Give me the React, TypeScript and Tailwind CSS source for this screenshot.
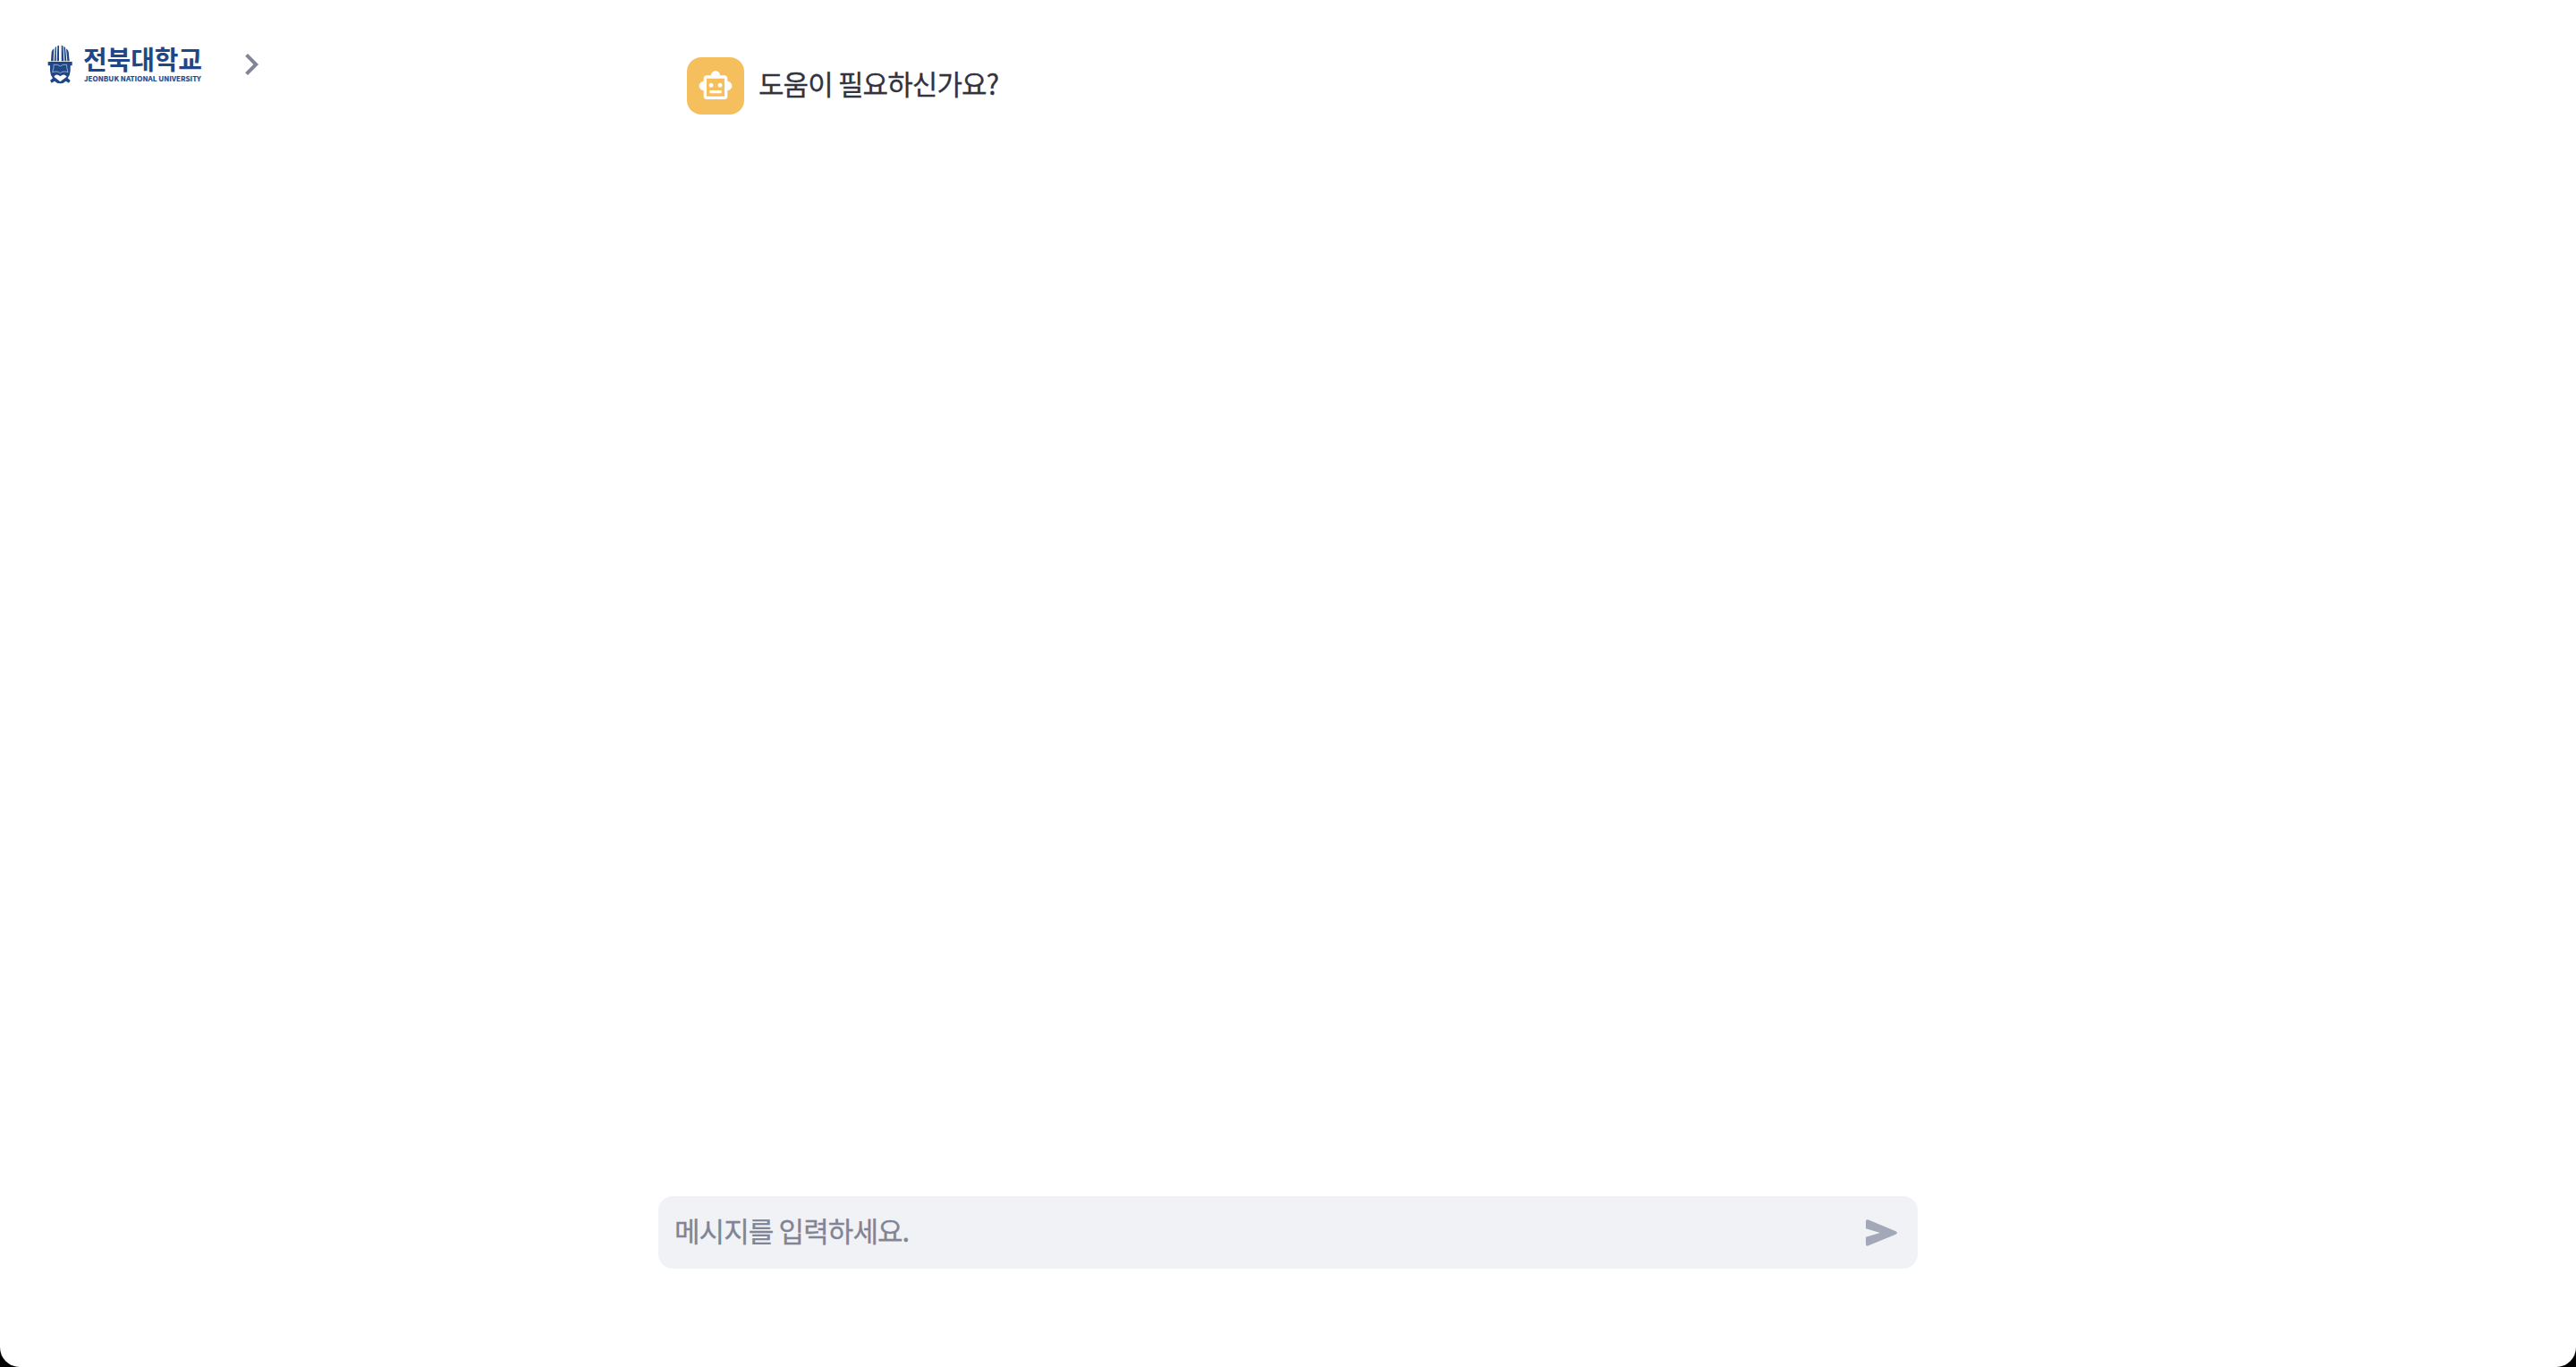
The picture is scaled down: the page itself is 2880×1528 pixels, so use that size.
function Crest() {
  return (
    <svg viewBox="36 30 84 132" className="h-11 w-7 shrink-0" fill="#1f4788" aria-hidden="true">
      <path d="M48 85 L50 54 Q52 47 58 43 L56 85Z" />
      <path d="M59 85 L62 39 L66 36 L65 85Z" />
      <path d="M68 85 L70 34 L75 32 L75 85Z" />
      <path d="M83 85 L83 32 L88 34 L91 85Z" />
      <path d="M94 85 L91 36 L96 39 L100 85Z" />
      <path d="M103 85 L99 43 Q106 48 107 54 L110 85Z" />
      <path d="M38 87 H119 V100 H113 V118 Q112 133 104 142 L113 150 L108 158 L98 152 Q90 160 79 160 Q68 160 60 152 L50 158 L45 150 L54 142 Q46 133 45 118 V100 H38Z" />
      <path d="M57 97 Q72 95 79 102 Q86 95 101 97 V106 L105 122 Q88 117 79 125 Q70 117 53 122 L57 106Z" fill="none" stroke="#a9bcd8" strokeWidth="2.5" />
      <path d="M58 137 Q64 128 73 132 L79 136 L85 132 Q94 128 101 137 L79 154Z" fill="#fff" />
    </svg>
  );
}

export default function App() {
  return (
    <div className="h-[1528px] w-full bg-black">
      <div className="flex h-full flex-col overflow-hidden rounded-b-[22px] bg-white font-['Noto_Sans_CJK_KR',sans-serif]">
        <div className="grid flex-1 grid-cols-[736px_1408px_1fr] items-start">
          <header className="flex pl-[53px] pt-[50px]">
            <Crest />
            <div className="ml-3 w-[136px] whitespace-nowrap text-[#1f4788]">
              <div className="-mt-0.5 h-9 text-[29px] font-bold leading-[34px] tracking-[-0.1px]">전북대학교</div>
              <div className="ml-px h-2 text-[8px] font-bold leading-[8px] tracking-[0.06px] [-webkit-text-stroke:0.2px]">
                JEONBUK NATIONAL UNIVERSITY
              </div>
            </div>
            <button aria-label="Open sidebar" className="-mt-0.5 ml-7 size-12">
              <svg viewBox="0 0 24 24" className="size-12" fill="#808495">
                <path d="M10 6L8.59 7.41 13.17 12l-4.58 4.59L10 18l6-6z" />
              </svg>
            </button>
          </header>
          <main className="flex items-center gap-4 pl-8 pt-16">
            <div className="flex size-16 items-center justify-center rounded-2xl bg-[#f6bf5d]">
              <svg viewBox="0 0 24 24" className="size-10" fill="white">
                <path d="M20 9V7c0-1.1-.9-2-2-2h-3c0-1.66-1.34-3-3-3S9 3.34 9 5H6c-1.1 0-2 .9-2 2v2c-1.66 0-3 1.34-3 3s1.34 3 3 3v4c0 1.1.9 2 2 2h12c1.1 0 2-.9 2-2v-4c1.66 0 3-1.34 3-3s-1.34-3-3-3zm-2 10H6V7h12v12zm-9-6c-.83 0-1.5-.67-1.5-1.5S8.17 10 9 10s1.5.67 1.5 1.5S9.83 13 9 13zm7.5-1.5c0 .83-.67 1.5-1.5 1.5s-1.5-.67-1.5-1.5.67-1.5 1.5-1.5 1.5.67 1.5 1.5zM8 15h8v2H8v-2z" />
              </svg>
            </div>
            <p className="whitespace-nowrap pb-[7px] text-[31px] leading-[48px] tracking-[-0.9px] text-[#31333f] [-webkit-text-stroke:0.3px]">
              도움이 필요하신가요?
            </p>
          </main>
        </div>
        <footer className="flex justify-center pb-[110px]">
          <div className="flex h-[81px] w-[1408px] items-center rounded-2xl bg-[#f0f2f6] pl-[18px] pr-[16px]">
            <input
              placeholder="메시지를 입력하세요."
              className="mb-[6px] h-12 min-w-0 flex-1 bg-transparent text-[31px] tracking-[-0.9px] outline-none [-webkit-text-stroke:0.3px] placeholder:text-[#808495]"
            />
            <button aria-label="Send" className="size-12">
              <svg viewBox="0 0 48 48" className="size-12" fill="#a3a8b8">
                <path d="M6 11.5Q6 8.2 9 9.5L39.5 22.3Q42.5 24 39.5 25.7L9 38.3Q6 39.5 6 36.5V28.8L22 24L6 19.3Z" />
              </svg>
            </button>
          </div>
        </footer>
      </div>
    </div>
  );
}
